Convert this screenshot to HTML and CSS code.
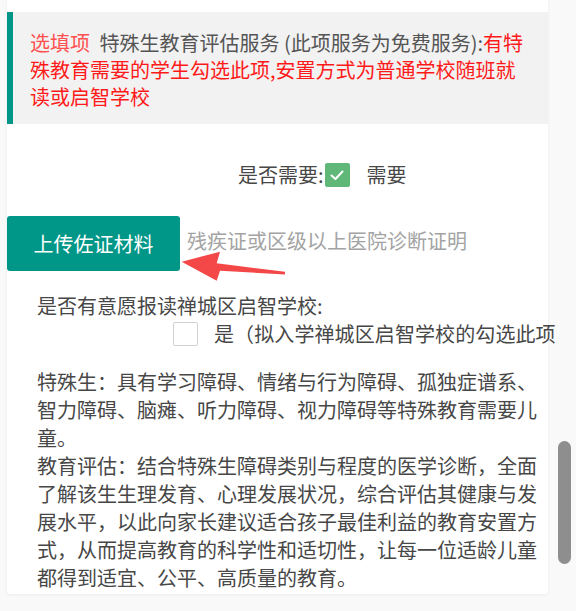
FILE: index.html
```html
<!DOCTYPE html>
<html lang="zh-CN">
<head>
<meta charset="utf-8">
<title>特殊生教育评估服务</title>
<link rel="stylesheet" href="styles.css">
</head>
<body>
<div class="card">
  <div class="notice">
    <span class="tag">选填项</span> 特殊生教育评估服务 (此项服务为免费服务):<span class="warn">有特殊教育需要的学生勾选此项,安置方式为普通学校随班就读或启智学校</span>
  </div>

  <div class="need-row">
    <span class="label">是否需要:</span>
    <span class="check checked">
      <svg viewBox="0 0 24 24" width="24" height="24"><path d="M6.5 12.5 L10.5 16 L17.5 8.5" fill="none" stroke="#fff" stroke-width="2" stroke-linecap="round" stroke-linejoin="round"/></svg>
    </span>
    <span class="need-text">需要</span>
  </div>

  <div class="upload-row">
    <button class="btn">上传佐证材料</button>
    <span class="hint">残疾证或区级以上医院诊断证明</span>
    <svg class="arrow" viewBox="175 248 115 37" width="115" height="37">
      <polygon points="181.7,261.7 220,251.7 216.7,263.3 285,271.7 285,274.5 220,270.7 216.7,280.7" fill="#f44848"/>
    </svg>
  </div>

  <div class="willing">是否有意愿报读禅城区启智学校:</div>
  <div class="option-row">
    <span class="check"></span>
    <span class="option-text">是（拟入学禅城区启智学校的勾选此项</span>
  </div>

  <div class="desc">特殊生：具有学习障碍、情绪与行为障碍、孤独症谱系、智力障碍、脑瘫、听力障碍、视力障碍等特殊教育需要儿童。<br>教育评估：结合特殊生障碍类别与程度的医学诊断，全面了解该生生理发育、心理发展状况，综合评估其健康与发展水平，以此向家长建议适合孩子最佳利益的教育安置方式，从而提高教育的科学性和适切性，让每一位适龄儿童都得到适宜、公平、高质量的教育。</div>
</div>
<div class="scrollbar"></div>
</body>
</html>
```

FILE: styles.css
```css
html, body {
  margin: 0;
  padding: 0;
}
body {
  background: #f9f9f9;
  font-family: "Noto Sans CJK SC", "Noto Sans", sans-serif;
  font-size: 20px;
  color: #474747;
  height: 611px;
  overflow: hidden;
  position: relative;
}
.card {
  margin-left: 7px;
  width: 541px;
  background: #fff;
  padding: 12px 0 2px 0;
  box-shadow: 0 1px 3px rgba(0,0,0,0.06);
  border-radius: 0 0 3px 3px;
}
.notice {
  background: #f2f2f2;
  border-left: 6px solid #009688;
  padding: 17px 15px 14px 17px;
  line-height: 27px;
  color: #555;
}
.tag {
  color: #ff5050;
  margin-right: 5px;
}
.warn {
  color: #ff1a1a;
}
.need-row {
  margin-top: 37px;
  padding-left: 231px;
  display: flex;
  align-items: center;
  height: 28px;
  line-height: 28px;
}
.need-row .label {
  margin-right: 1px;
}
.check {
  display: inline-block;
  width: 25px;
  height: 24px;
  box-sizing: border-box;
  border: 1px solid #d2d2d2;
  border-radius: 2px;
  background: #fff;
  flex: none;
}
.check.checked {
  background: #5fb878;
  border-color: #5fb878;
  position: relative;
}
.check.checked svg {
  position: absolute;
  left: -1px;
  top: -1px;
}
.need-text {
  margin-left: 17px;
}
.upload-row {
  margin-top: 27px;
  display: flex;
  align-items: center;
  position: relative;
}
.btn {
  width: 173px;
  height: 55px;
  border: none;
  border-radius: 3px;
  background: #009688;
  color: #fff;
  font-family: inherit;
  font-size: 20px;
  padding: 0;
  cursor: pointer;
}
.hint {
  margin-left: 7px;
  color: #a3a3a3;
  line-height: 28px;
  margin-top: -5px;
}
.arrow {
  position: absolute;
  left: 168px;
  top: 32px;
}
.willing {
  margin-top: 21px;
  padding-left: 30px;
  line-height: 28px;
}
.option-row {
  padding-left: 166px;
  display: flex;
  align-items: center;
  height: 28px;
  line-height: 28px;
  white-space: nowrap;
}
.option-text {
  margin-left: 16px;
  letter-spacing: 0.1px;
}
.desc {
  margin-top: 20px;
  padding: 0 2px 0 30px;
  line-height: 28px;
}
.scrollbar {
  position: absolute;
  left: 558px;
  top: 441px;
  width: 13px;
  height: 123px;
  border-radius: 7px;
  background: #8e8e8e;
}
```
